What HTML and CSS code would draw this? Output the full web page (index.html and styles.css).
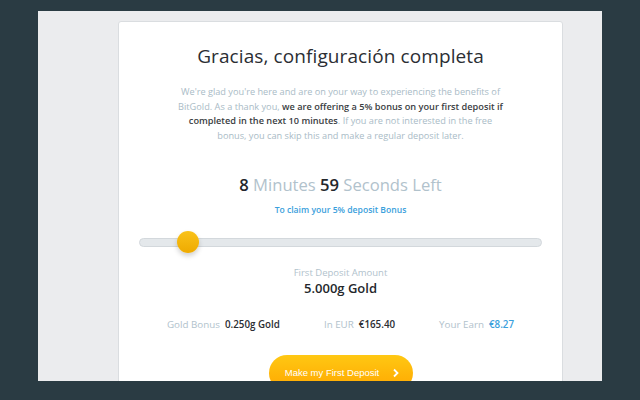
FILE: index.html
```html
<!DOCTYPE html>
<html lang="en">
<head>
    <meta charset="UTF-8">
    <title>Deposit Bonus</title>
    <link rel="stylesheet" href="styles.css">
</head>
<body>
    <div class="frame">
        <div class="card">
            <h1>Gracias, configuración completa</h1>
            <p class="intro">
                We're glad you're here and are on your way to experiencing the benefits of<br>
                BitGold. As a thank you, <strong>we are offering a 5% bonus on your first deposit if<br>
                completed in the next 10 minutes</strong>. If you are not interested in the free<br>
                bonus, you can skip this and make a regular deposit later.
            </p>

            <!-- Countdown -->
            <div class="timer"><b>8</b> Minutes <b>59</b> Seconds Left</div>
            <div class="claim">To claim your 5% deposit Bonus</div>

            <div class="slider">
                <div class="track"></div>
                <div class="knob" style="left: 38px;"></div>
            </div>

            <div class="amount-label">First Deposit Amount</div>
            <div class="amount">5.000g Gold</div>

            <div class="stats">
                <div class="stat"><span class="label">Gold Bonus</span><span class="value">0.250g Gold</span></div>
                <div class="stat"><span class="label">In EUR</span><span class="value">€165.40</span></div>
                <div class="stat"><span class="label">Your Earn</span><span class="value blue">€8.27</span></div>
            </div>

            <a href="#" class="btn">Make my First Deposit
                <svg width="8" height="10" viewBox="0 0 8 10"><path d="M2 1.5 L5.5 5 L2 8.5" fill="none" stroke="#fff" stroke-width="1.8"/></svg>
            </a>
        </div>
    </div>
</body>
</html>
```

FILE: styles.css
```css
* {
    margin: 0;
    padding: 0;
    box-sizing: border-box;
}

body {
    font-family: "Open Sans", "Noto Sans", sans-serif;
    background-color: #2a3b43;
    width: 640px;
    height: 400px;
    overflow: hidden;
    padding: 11px 38px 0;
}

/* Light grey page area */
.frame {
    background-color: #ebecee;
    height: 370px;
    overflow: hidden;
    padding-top: 10px;
}

/* White card */
.card {
    width: 445px;
    margin-left: 80px;
    height: 400px;
    background: #fff;
    border: 1px solid #dadde0;
    border-radius: 3px;
    text-align: center;
    padding-top: 21px;
}

h1 {
    font-size: 19px;
    font-weight: 400;
    color: #2b2e33;
    letter-spacing: 0.1px;
    line-height: 26px;
}

.intro {
    margin: 16px auto 0;
    font-size: 9.2px;
    line-height: 14.7px;
    color: #a9bbc6;
}

.intro strong {
    color: #3a3d42;
    font-weight: 600;
}

.timer {
    margin-top: 30px;
    font-size: 16.6px;
    line-height: 22px;
    color: #b1c2cc;
}

.timer b {
    color: #24272c;
    font-weight: 600;
}

.claim {
    margin-top: 8px;
    font-size: 8.6px;
    color: #3aa0dc;
    font-weight: 600;
    line-height: 12px;
}

/* Range slider */
.slider {
    position: relative;
    margin: 15px 20px 0;
    height: 22px;
}

.track {
    position: absolute;
    left: 0;
    right: 0;
    top: 7px;
    height: 9px;
    background: #e4e8eb;
    border: 1px solid #d3d8dc;
    border-radius: 5px;
}

.knob {
    position: absolute;
    top: 0;
    width: 22px;
    height: 22px;
    border-radius: 50%;
    background: linear-gradient(#f9c21a, #eeaa00);
    box-shadow: 0 3px 5px rgba(0, 0, 0, 0.18);
}

.amount-label {
    margin-top: 13px;
    font-size: 9.5px;
    color: #b1c2cc;
    line-height: 14px;
}

.amount {
    font-size: 13px;
    font-weight: 600;
    color: #24272c;
    line-height: 16px;
}

.stats {
    display: flex;
    justify-content: center;
    gap: 44px;
    margin-top: 22px;
    font-size: 9.8px;
    line-height: 14px;
}

.stat .label {
    color: #b1c2cc;
    margin-right: 5px;
}

.stat .value {
    color: #2b2e33;
    font-weight: 600;
}

.stat .value.blue {
    color: #3aa0dc;
}

.btn {
    display: inline-flex;
    align-items: center;
    justify-content: center;
    gap: 13px;
    margin-top: 23px;
    width: 144px;
    height: 36px;
    border-radius: 18px;
    background: linear-gradient(#ffc813, #ffa600);
    color: #fff;
    font-family: "Liberation Sans", Arial, sans-serif;
    font-size: 9.5px;
    text-decoration: none;
    padding-left: 4px;
}
```
